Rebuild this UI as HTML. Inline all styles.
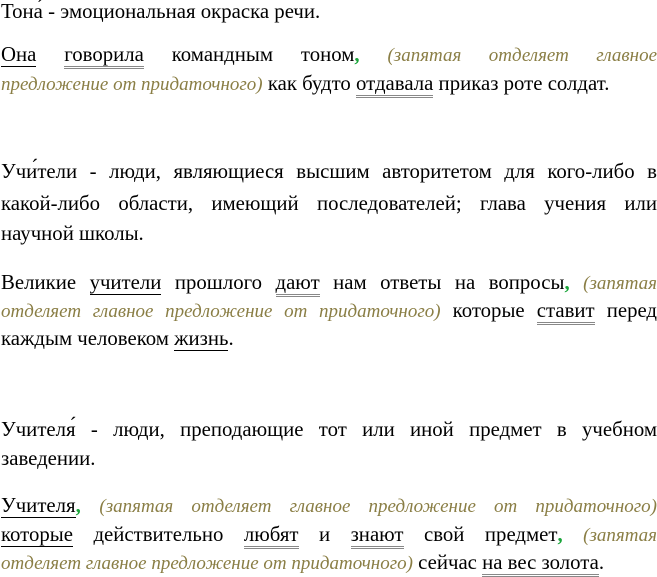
<!DOCTYPE html>
<html><head><meta charset="utf-8"><style>
body{margin:0;width:657px;height:575px;background:#fff;overflow:hidden;position:relative;font-family:"Liberation Serif",serif;font-size:20.8px;color:#000}
.l{position:absolute;left:1px;width:656px;white-space:nowrap;line-height:24px}
.j{text-align:justify;text-align-last:justify;white-space:normal}
.c{color:#8a7e45;font-style:italic;font-size:19px}
.g{color:#1aa53a;font-weight:bold}
.s{border-bottom:1.5px solid #000}
.p{border-bottom:3px double #888}
</style></head><body>
<div class="l" style="top:0">Тона́ - эмоциональная окраска речи.</div>
<div class="l j" style="top:43px"><span class="s">Она</span> <span class="p">говорила</span> командным тоном<span class="g">,</span> <span class="c">(запятая отделяет главное</span></div>
<div class="l" style="top:72px"><span class="c">предложение от придаточного)</span> как будто <span class="p">отдавала</span> приказ роте солдат.</div>
<div class="l j" style="top:160px">Учи́тели - люди, являющиеся высшим авторитетом для кого-либо в</div>
<div class="l j" style="top:192px">какой-либо области, имеющий последователей; глава учения или</div>
<div class="l" style="top:222px">научной школы.</div>
<div class="l j" style="top:271px">Великие <span class="s">учители</span> прошлого <span class="p">дают</span> нам ответы на вопросы<span class="g">,</span> <span class="c">(запятая</span></div>
<div class="l j" style="top:299px"><span class="c">отделяет главное предложение от придаточного)</span> которые <span class="p">ставит</span> перед</div>
<div class="l" style="top:327px">каждым человеком <span class="s">жизнь</span>.</div>
<div class="l j" style="top:418px">Учителя́ - люди, преподающие тот или иной предмет в учебном</div>
<div class="l" style="top:447px">заведении.</div>
<div class="l j" style="top:494px"><span class="s">Учителя</span><span class="g">,</span> <span class="c">(запятая отделяет главное предложение от придаточного)</span></div>
<div class="l j" style="top:523px"><span class="s">которые</span> действительно <span class="p">любят</span> и <span class="p">знают</span> свой предмет<span class="g">,</span> <span class="c">(запятая</span></div>
<div class="l" style="top:551px"><span class="c">отделяет главное предложение от придаточного)</span> сейчас <span class="p">на вес золота</span>.</div>
</body></html>
